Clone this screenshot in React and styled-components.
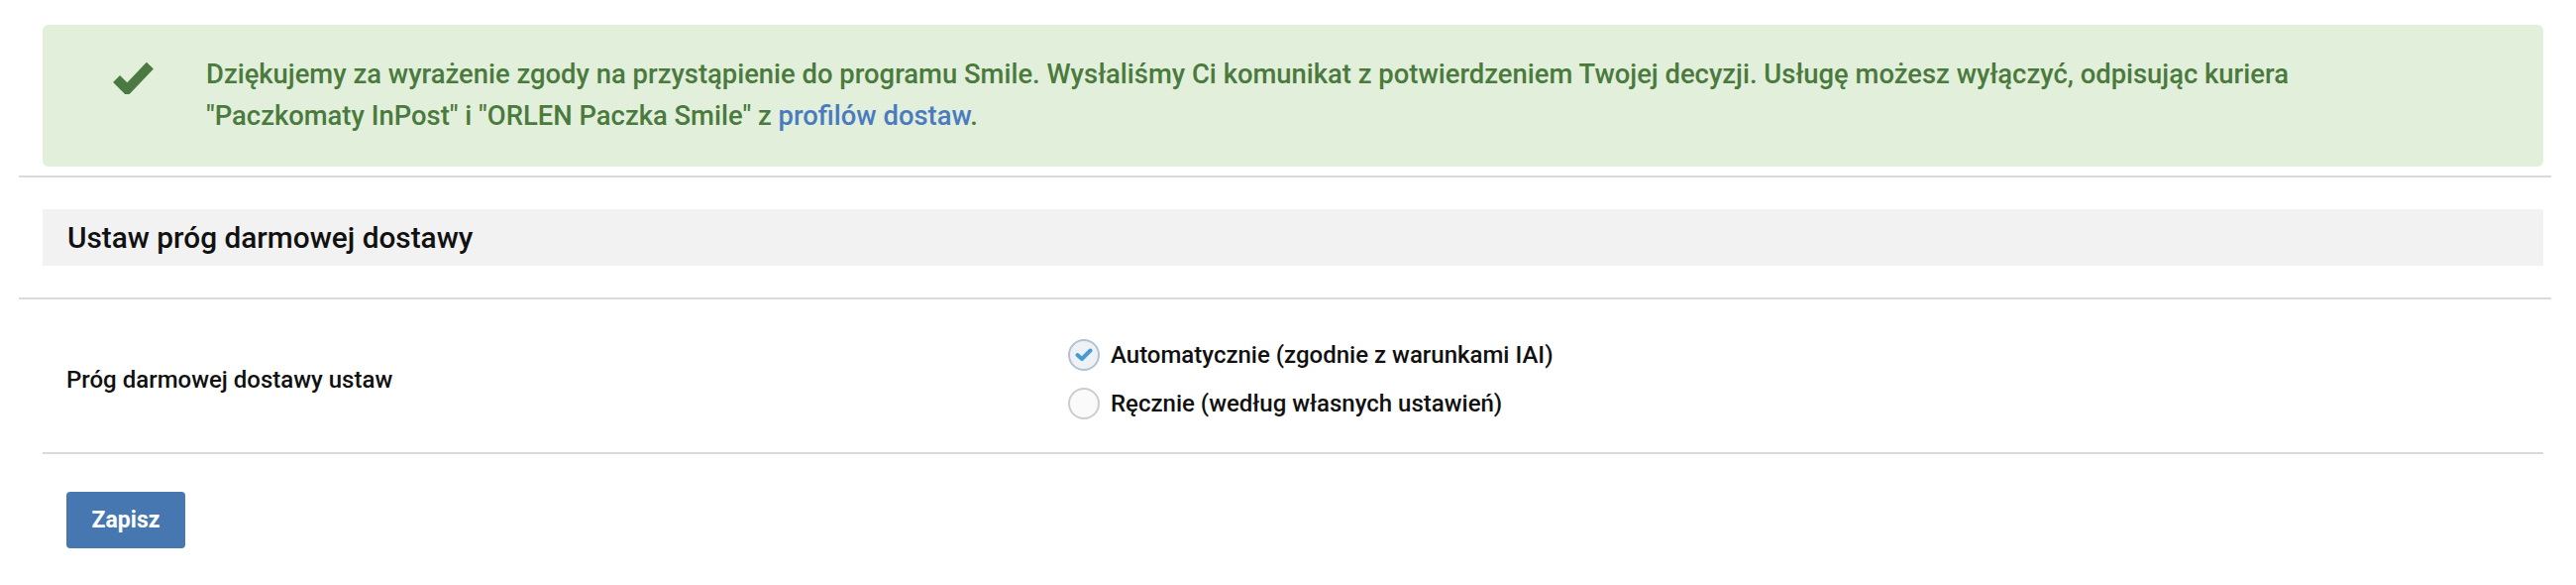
import React from "react";
import styled, { createGlobalStyle } from "styled-components";

const GlobalStyle = createGlobalStyle`
  html, body { margin: 0; padding: 0; background: #ffffff; }
  body { font-family: Roboto, "Liberation Sans", Arial, sans-serif; color: #222; }
  * { box-sizing: border-box; }
`;

const Page = styled.div`
  padding-top: 25px;
  width: 2600px;
`;

const Alert = styled.div`
  margin: 0 33px 0 43px;
  min-height: 143px;
  background: #e2efda;
  border-radius: 6px;
  display: flex;
  align-items: flex-start;
  padding: 29px 40px 30px 71px;
  gap: 53px;
`;

const AlertIcon = styled.svg`
  flex: none;
  width: 41px;
  height: 35px;
  margin-top: 6px;
`;

const AlertText = styled.p`
  margin: 0;
  font-size: 27.4px;
  line-height: 42px;
  font-weight: 500;
  color: #4a7a3d;
`;

const Link = styled.a`
  color: #4a7bbf;
  text-decoration: none;
`;

const Divider = styled.hr`
  border: 0;
  height: 2px;
  background: #dadada;
  margin: ${(p) => p.$top}px 25px 0 19px;
`;

const SectionHeader = styled.div`
  margin: 32px 33px 0 43px;
  height: 57px;
  background: #f2f2f2;
  display: flex;
  align-items: center;
  padding-left: 25px;
`;

const SectionTitle = styled.h2`
  margin: 0;
  font-size: 29.8px;
  font-weight: 500;
  color: #111;
`;

const FormRow = styled.div`
  margin: 0 33px 0 43px;
  padding: 40px 0 33px;
  display: grid;
  grid-template-columns: 1035px 1fr;
  align-items: center;
  border-bottom: 2px solid #dadada;
`;

const FieldLabel = styled.div`
  padding-left: 24px;
  font-size: 24px;
  font-weight: 500;
  color: #111;
`;

const RadioGroup = styled.div`
  display: flex;
  flex-direction: column;
  gap: 17px;
`;

const RadioOption = styled.label`
  display: flex;
  align-items: center;
  gap: 11px;
  font-size: 24px;
  font-weight: 500;
  color: #111;
  height: 32px;
`;

const RadioCircle = styled.span`
  flex: none;
  width: 32px;
  height: 32px;
  border-radius: 50%;
  border: 2px solid ${(p) => (p.$checked ? "#b4c2d0" : "#cccccc")};
  background: ${(p) => (p.$checked ? "#eef2f6" : "#fafafa")};
  display: flex;
  align-items: center;
  justify-content: center;
`;

const SaveButton = styled.button`
  margin: 38px 0 0 67px;
  width: 120px;
  height: 57px;
  border: 0;
  border-radius: 4px;
  background: #4677b0;
  color: #fff;
  font-family: Roboto, "Liberation Sans", Arial, sans-serif;
  font-size: 23px;
  font-weight: 700;
  display: block;
  cursor: pointer;
`;

function Radio({ checked, children }) {
  return (
    <RadioOption>
      <RadioCircle $checked={checked}>
        {checked && (
          <svg width="18" height="14" viewBox="0 0 18 14">
            <polyline
              points="2.5,7 7,11 15.5,2.5"
              fill="none"
              stroke="#4a9bd2"
              strokeWidth="4"
              strokeLinecap="round"
              strokeLinejoin="round"
            />
          </svg>
        )}
      </RadioCircle>
      {children}
    </RadioOption>
  );
}

export default function App() {
  return (
    <>
      <GlobalStyle />
      <Page>
        <Alert>
          <AlertIcon viewBox="0 0 40 34">
            <polyline
              points="3.5,19 14,29.5 36.5,6"
              fill="none"
              stroke="#4a7a41"
              strokeWidth="9.5"
              strokeLinecap="butt"
              strokeLinejoin="miter"
            />
          </AlertIcon>
          <AlertText>
            Dziękujemy za wyrażenie zgody na przystąpienie do programu Smile. Wysłaliśmy Ci komunikat z potwierdzeniem Twojej decyzji. Usługę możesz wyłączyć, odpisując kuriera
            <br />
            "Paczkomaty InPost" i "ORLEN Paczka Smile" z <Link href="#">profilów dostaw</Link>.
          </AlertText>
        </Alert>
        <Divider $top={9} />
        <SectionHeader>
          <SectionTitle>Ustaw próg darmowej dostawy</SectionTitle>
        </SectionHeader>
        <Divider $top={32} />
        <FormRow>
          <FieldLabel>Próg darmowej dostawy ustaw</FieldLabel>
          <RadioGroup>
            <Radio checked>Automatycznie (zgodnie z warunkami IAI)</Radio>
            <Radio>Ręcznie (według własnych ustawień)</Radio>
          </RadioGroup>
        </FormRow>
        <SaveButton>Zapisz</SaveButton>
      </Page>
    </>
  );
}
